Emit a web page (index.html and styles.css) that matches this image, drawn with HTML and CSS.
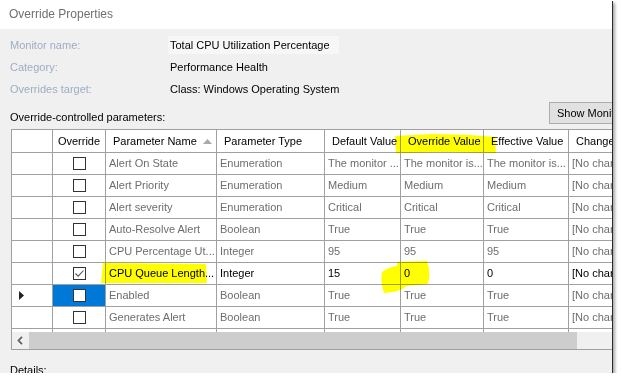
FILE: index.html
```html
<!DOCTYPE html>
<html lang="en">
<head>
    <meta charset="UTF-8">
    <title>Override Properties</title>
    <link rel="stylesheet" href="styles.css">
</head>
<body>
    <div class="window">
        <div class="titlebar">Override Properties</div>

        <div class="content">
            <div class="info-row">
                <span class="info-label">Monitor name:</span>
                <span class="info-value boxed">Total CPU Utilization Percentage</span>
            </div>
            <div class="info-row">
                <span class="info-label">Category:</span>
                <span class="info-value">Performance Health</span>
            </div>
            <div class="info-row">
                <span class="info-label">Overrides target:</span>
                <span class="info-value">Class: Windows Operating System</span>
            </div>

            <div class="params-bar">
                <span class="params-label">Override-controlled parameters:</span>
                <button class="show-btn">Show Monitor Properties...</button>
            </div>

            <div class="grid">
                <div class="grid-row header">
                    <div class="cell"></div>
                    <div class="cell center">Override</div>
                    <div class="cell sorted">
                        <span>Parameter Name</span>
                        <svg width="9" height="5" viewBox="0 0 9 5"><polygon points="0,5 4.5,0 9,5" fill="#a9a9a9"/></svg>
                    </div>
                    <div class="cell">Parameter Type</div>
                    <div class="cell">Default Value</div>
                    <div class="cell">Override Value</div>
                    <div class="cell">Effective Value</div>
                    <div class="cell">Change Status</div>
                </div>

                <div class="grid-body">
                    <div class="grid-row">
                        <div class="cell rowhead"></div>
                        <div class="cell check"><span class="chk"></span></div>
                        <div class="cell">Alert On State</div>
                        <div class="cell">Enumeration</div>
                        <div class="cell">The monitor ...</div>
                        <div class="cell">The monitor is...</div>
                        <div class="cell">The monitor is...</div>
                        <div class="cell">[No change]</div>
                    </div>
                    <div class="grid-row">
                        <div class="cell rowhead"></div>
                        <div class="cell check"><span class="chk"></span></div>
                        <div class="cell">Alert Priority</div>
                        <div class="cell">Enumeration</div>
                        <div class="cell">Medium</div>
                        <div class="cell">Medium</div>
                        <div class="cell">Medium</div>
                        <div class="cell">[No change]</div>
                    </div>
                    <div class="grid-row">
                        <div class="cell rowhead"></div>
                        <div class="cell check"><span class="chk"></span></div>
                        <div class="cell">Alert severity</div>
                        <div class="cell">Enumeration</div>
                        <div class="cell">Critical</div>
                        <div class="cell">Critical</div>
                        <div class="cell">Critical</div>
                        <div class="cell">[No change]</div>
                    </div>
                    <div class="grid-row">
                        <div class="cell rowhead"></div>
                        <div class="cell check"><span class="chk"></span></div>
                        <div class="cell">Auto-Resolve Alert</div>
                        <div class="cell">Boolean</div>
                        <div class="cell">True</div>
                        <div class="cell">True</div>
                        <div class="cell">True</div>
                        <div class="cell">[No change]</div>
                    </div>
                    <div class="grid-row">
                        <div class="cell rowhead"></div>
                        <div class="cell check"><span class="chk"></span></div>
                        <div class="cell">CPU Percentage Ut...</div>
                        <div class="cell">Integer</div>
                        <div class="cell">95</div>
                        <div class="cell">95</div>
                        <div class="cell">95</div>
                        <div class="cell">[No change]</div>
                    </div>
                    <div class="grid-row active">
                        <div class="cell rowhead"></div>
                        <div class="cell check">
                            <span class="chk">
                                <svg width="11" height="11" viewBox="0 0 11 11"><polyline points="1.5,5.5 4.2,8.2 9.5,2.5" fill="none" stroke="#555" stroke-width="1.1"/></svg>
                            </span>
                        </div>
                        <div class="cell">CPU Queue Length...</div>
                        <div class="cell">Integer</div>
                        <div class="cell">15</div>
                        <div class="cell">0</div>
                        <div class="cell">0</div>
                        <div class="cell">[No change]</div>
                    </div>
                    <div class="grid-row">
                        <div class="cell rowhead">
                            <svg width="5" height="9" viewBox="0 0 5 9"><polygon points="0,0 5,4.5 0,9" fill="#222"/></svg>
                        </div>
                        <div class="cell check selected"><span class="chk"></span></div>
                        <div class="cell">Enabled</div>
                        <div class="cell">Boolean</div>
                        <div class="cell">True</div>
                        <div class="cell">True</div>
                        <div class="cell">True</div>
                        <div class="cell">[No change]</div>
                    </div>
                    <div class="grid-row">
                        <div class="cell rowhead"></div>
                        <div class="cell check"><span class="chk"></span></div>
                        <div class="cell">Generates Alert</div>
                        <div class="cell">Boolean</div>
                        <div class="cell">True</div>
                        <div class="cell">True</div>
                        <div class="cell">True</div>
                        <div class="cell">[No change]</div>
                    </div>
                    <div class="grid-row">
                        <div class="cell rowhead"></div>
                        <div class="cell check"><span class="chk"></span></div>
                        <div class="cell">Interval Seconds</div>
                        <div class="cell">Integer</div>
                        <div class="cell">60</div>
                        <div class="cell">60</div>
                        <div class="cell">60</div>
                        <div class="cell">[No change]</div>
                    </div>
                </div>

                <div class="hscroll">
                    <div class="arrow">
                        <svg width="6" height="9" viewBox="0 0 6 9"><polyline points="5,0.8 1.5,4.5 5,8.2" fill="none" stroke="#606060" stroke-width="1.8"/></svg>
                    </div>
                    <div class="thumb"></div>
                </div>
            </div>

            <div class="details">Details:</div>
        </div>

        <!-- marker highlights drawn over the screenshot -->
        <svg class="marker" width="612" height="373" viewBox="0 0 612 373">
            <polygon points="395,136 432,134 470,135 495,137 496,153 445,152 396,153" fill="#ffff00"/>
            <polygon points="103,263 206,264 207,283 101,283" fill="#ffff00"/>
            <path d="M397,262 L427,261 Q431,272 428,284 L406,286 Q401,292 384,293 Q380,282 382,272 Q388,267 397,266 Z" fill="#ffff00"/>
        </svg>
    </div>
</body>
</html>
```

FILE: styles.css
```css
body {
    margin: 0;
    background: #fff;
    font-family: "Liberation Sans", Arial, sans-serif;
    font-size: 11px;
    color: #000;
}
.window {
    position: relative;
    width: 612px;
    height: 373px;
    overflow: hidden;
    background: #f0f0f0;
    box-shadow: 1px 1px 0 #2b2b2b, 3px 3px 3px rgba(0,0,0,0.35);
}
.titlebar {
    height: 29px;
    line-height: 29px;
    padding-left: 9px;
    background: #fff;
    color: #707070;
    font-size: 12px;
}
.content {
    width: 720px;
    padding: 5px 0 0 10px;
}
.info-row {
    display: flex;
    align-items: center;
    height: 22px;
}
.info-label {
    width: 160px;
    color: #9eadc3;
}
.boxed {
    background: #f7f7f7;
    margin-left: -2px;
    padding: 3px 9px 3px 2px;
}
.params-bar {
    display: grid;
    grid-template-columns: 539px 170px;
    height: 29px;
}
.params-label {
    align-self: end;
    line-height: 14px;
    margin-bottom: 5px;
}
.show-btn {
    margin-top: 2px;
    height: 22px;
    padding: 0 7px;
    border: 1px solid #adadad;
    background: #e1e1e1;
    font: inherit;
    color: #000;
    text-align: left;
    white-space: nowrap;
}
.grid {
    margin-left: 1px;
    width: 640px;
    border: 1px solid #a0a0a0;
    background: #fff;
}
.grid-row {
    display: grid;
    grid-template-columns: 41px 53px 111px 108px 76px 83px 85px 120px;
    height: 22px;
}
.grid-row.header {
    height: 23px;
}
.cell {
    box-sizing: border-box;
    border-right: 1px solid #a0a0a0;
    border-bottom: 1px solid #a0a0a0;
    padding: 0 3px;
    line-height: 21px;
    white-space: nowrap;
    overflow: hidden;
    color: #6d6d6d;
}
.header .cell {
    line-height: 22px;
    padding: 0 7px;
    color: #000;
}
.header .center {
    padding: 0;
    text-align: center;
}
.header .sorted {
    display: flex;
    align-items: center;
    justify-content: space-between;
    padding-right: 4px;
}
.active .cell {
    color: #000;
}
.rowhead {
    display: flex;
    align-items: center;
    padding-left: 7px;
}
.check {
    display: flex;
    align-items: center;
    justify-content: center;
    padding: 0;
}
.check.selected {
    background: #0078d7;
}
.chk {
    box-sizing: border-box;
    width: 13px;
    height: 13px;
    border: 1px solid #333;
    background: #fff;
    display: flex;
    align-items: center;
    justify-content: center;
}
.grid-body {
    height: 179px;
    overflow: hidden;
}
.hscroll {
    display: flex;
    height: 17px;
    background: #f0f0f0;
}
.arrow {
    width: 17px;
    display: flex;
    align-items: center;
    padding-left: 5px;
    box-sizing: border-box;
}
.thumb {
    width: 548px;
    background: #cdcdcd;
}
.details {
    margin-top: 13px;
    line-height: 14px;
}
.marker {
    position: absolute;
    left: 0;
    top: 0;
    pointer-events: none;
    mix-blend-mode: multiply;
}
```
